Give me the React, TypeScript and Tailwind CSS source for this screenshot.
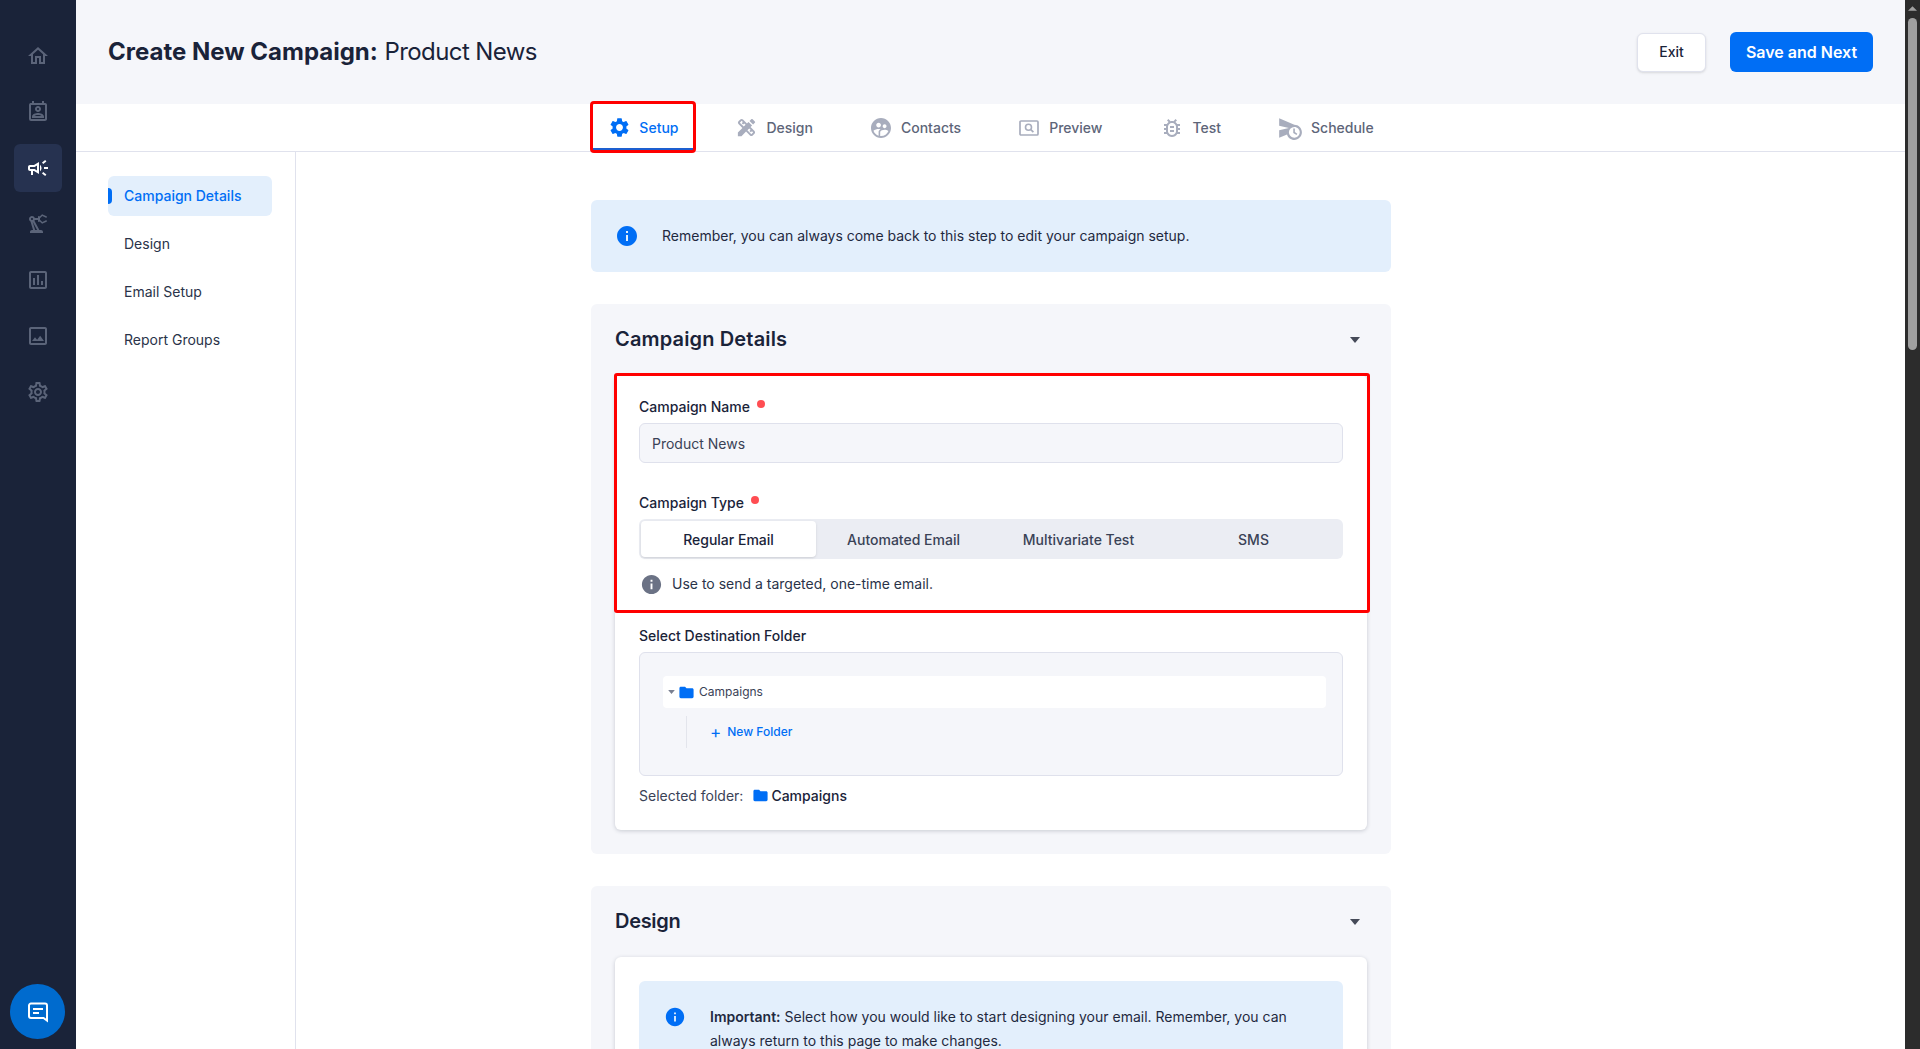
import React from "react";
import {
  MdOutlineHome,
  MdOutlinePermContactCalendar,
  MdOutlineCampaign,
  MdOutlinePrecisionManufacturing,
  MdOutlineAssessment,
  MdOutlineImage,
  MdOutlineSettings,
  MdSettings,
  MdDesignServices,
  MdOutlineBugReport,
  MdScheduleSend,
  MdSupervisedUserCircle,
  MdInfo,
  MdFolder,
} from "react-icons/md";

const font = "font-['Inter','Liberation_Sans',sans-serif]";

function PreviewIcon() {
  return (
    <svg viewBox="0 0 20 16" className="h-4 w-5 text-[#a8adbd]" fill="none" stroke="currentColor">
      <rect x="1" y="1" width="18" height="14" rx="1" strokeWidth="1.7" />
      <circle cx="9.5" cy="7.3" r="3" strokeWidth="1.6" />
      <path d="M11.8 9.6l2.6 2.6" strokeWidth="1.7" />
    </svg>
  );
}

function Caret({ small }: { small?: boolean }) {
  return (
    <svg viewBox="0 0 10 6" className={small ? "h-[4px] w-[7px] text-[#7a8091]" : "h-[6px] w-[10px] text-[#454a58]"} fill="currentColor">
      <path d="M0 0h10L5 6z" />
    </svg>
  );
}

function Required() {
  return <span className="ml-[7px] mb-[4px] h-[8px] w-[8px] rounded-full bg-[#ff4d52]" />;
}

const sideIcons = [
  { I: MdOutlineHome, active: false },
  { I: MdOutlinePermContactCalendar, active: false },
  { I: MdOutlineCampaign, active: true },
  { I: MdOutlinePrecisionManufacturing, active: false },
  { I: MdOutlineAssessment, active: false },
  { I: MdOutlineImage, active: false },
  { I: MdOutlineSettings, active: false },
];

const tabs = [
  { label: "Design", box: "w-5", icon: <MdDesignServices className="shrink-0 text-[23px] text-[#a8adbd]" /> },
  { label: "Contacts", box: "w-5", icon: <MdSupervisedUserCircle className="shrink-0 text-[24px] text-[#a8adbd]" /> },
  { label: "Preview", box: "w-5", icon: <PreviewIcon /> },
  { label: "Test", box: "ml-[2px] w-5", icon: <MdOutlineBugReport className="shrink-0 text-[24px] text-[#a8adbd]" /> },
  { label: "Schedule", box: "w-[22px]", icon: <MdScheduleSend className="shrink-0 text-[26px] text-[#a8adbd]" /> },
];

export default function App() {
  return (
    <div className={`flex h-screen overflow-hidden bg-white text-[14px] text-[#1a2339] ${font}`}>
      <aside className="flex w-[76px] shrink-0 flex-col bg-[#1a2339]">
        <nav className="flex flex-col items-center gap-2 pt-[32px]">
          {sideIcons.map(({ I, active }, i) => (
            <div
              key={i}
              className={`flex h-12 w-12 items-center justify-center rounded-md ${active ? "bg-[#263250] text-white" : "text-[#5b6479]"}`}
            >
              <I className="text-[24px]" />
            </div>
          ))}
        </nav>
        <button className="mt-auto mb-[10px] ml-[10px] flex h-[55px] w-[55px] items-center justify-center rounded-full bg-[#006bce]">
          <svg viewBox="0 0 24 24" className="h-[24px] w-[24px]" fill="none" stroke="white" strokeWidth="2">
            <path d="M5 3.5h14a2 2 0 0 1 2 2V20.5l-3.5-2.5H5a2 2 0 0 1-2-2V5.5a2 2 0 0 1 2-2Z" />
            <path d="M7 9h10M7 13h6" strokeWidth="1.8" />
          </svg>
        </button>
      </aside>

      <div className="flex min-w-0 flex-1 flex-col">
        <header className="flex h-[104px] shrink-0 items-center justify-between bg-[#f5f6fa] pl-[32px] pr-[32px]">
          <h1 className="text-[24px] leading-8 text-[#1a2339]">
            <span className="font-bold">Create New Campaign:</span>{" "}
            <span className="font-normal tracking-[-0.6px]">Product News</span>
          </h1>
          <div className="flex items-center gap-6">
            <button className="h-[39px] w-[69px] rounded-md border border-[#e0e2ed] bg-white pb-[1px] text-[14px] font-medium text-[#1a2339] shadow-sm">
              Exit
            </button>
            <button className="h-[40px] w-[143px] rounded-md bg-[#006ef5] text-[16px] font-semibold text-white">
              Save and Next
            </button>
          </div>
        </header>

        <div className="flex h-[48px] shrink-0 items-stretch justify-center gap-6 border-b border-[#e0e2ed] pl-[2px]">
          <div className="relative flex items-center gap-[10px] border-b-[3px] border-[#1d5fd0] px-[17px] pt-[3px] text-[14px] font-medium text-[#006ef5]">
            <span className="flex w-5 items-center justify-center">
              <MdSettings className="shrink-0 text-[23px]" />
            </span>
            <span>Setup</span>
            <span className="absolute left-[-2px] right-[-1px] top-[-3px] bottom-[-5px] rounded-[4px] border-[3px] border-[#ff0000]" />
          </div>
          {tabs.map((t) => (
            <div key={t.label} className="flex items-center gap-[10px] px-[17px] text-[14px] font-medium text-[#5d6579]">
              <span className={`flex items-center justify-center ${t.box}`}>{t.icon}</span>
              <span>{t.label}</span>
            </div>
          ))}
        </div>

        <div className="flex min-h-0 flex-1">
          <nav className="flex w-[220px] shrink-0 flex-col gap-2 border-r border-[#e0e2ed] pl-[32px] pr-[23px] pt-[24px]">
            <div className="relative flex h-10 items-center rounded-md bg-[#e3effc] pb-[2px] pl-4 font-medium text-[#006ef5]">
              <span className="absolute left-0 top-3 h-4 w-1 rounded-r bg-[#006ef5]" />
              Campaign Details
            </div>
            {["Design", "Email Setup", "Report Groups"].map((x) => (
              <div key={x} className="flex h-10 items-center pb-[2px] pl-4 text-[#2a3349]">
                {x}
              </div>
            ))}
          </nav>

          <main className="min-w-0 flex-1 overflow-hidden pl-[295px] pt-[48px]">
            <div className="flex w-[800px] flex-col gap-8">
              <div className="flex h-[72px] items-center rounded-md bg-[#e3effc] pl-[24px]">
                <MdInfo className="text-[24px] text-[#006ef5]" />
                <span className="ml-[23px] pb-[1px] text-[#1f2940]">Remember, you can always come back to this step to edit your campaign setup.</span>
              </div>

              <section className="rounded-md bg-[#f5f6fa] px-6 pb-6">
                <div className="flex h-[71px] items-center justify-between pr-[7px]">
                  <h2 className="pb-[1px] text-[20px] font-semibold tracking-[0.15px] text-[#1a2339]">Campaign Details</h2>
                  <Caret />
                </div>
                <div className="relative rounded-md bg-white px-6 pb-[25px] pt-[21px] shadow-[0_1px_4px_rgba(26,35,57,0.2)]">
                  <span className="absolute -left-[1px] -right-[3px] -top-[2px] h-[240px] rounded-[3px] border-[3px] border-[#ff0000]" />
                  <label className="flex h-5 items-center font-medium">
                    Campaign Name
                    <Required />
                  </label>
                  <div className="mt-[7px] flex h-10 items-center rounded-md border border-[#dfe1ec] bg-[#f5f6fa] pl-3 text-[#3a4256]">
                    Product News
                  </div>
                  <label className="mt-[29px] flex h-5 items-center font-medium">
                    Campaign Type
                    <Required />
                  </label>
                  <div className="mt-[7px] flex h-10 items-center rounded-md bg-[#ebedf3] px-[2px] text-center">
                    <div className="flex h-9 w-[175px] items-center justify-center rounded bg-white font-medium shadow-sm">Regular Email</div>
                    <div className="w-[175px] font-medium text-[#3a4256]">Automated Email</div>
                    <div className="w-[175px] font-medium text-[#3a4256]">Multivariate Test</div>
                    <div className="w-[175px] font-medium text-[#3a4256]">SMS</div>
                  </div>
                  <div className="mt-[15px] flex h-5 items-center pl-[1px]">
                    <MdInfo className="text-[23px] text-[#6b7285]" />
                    <span className="ml-[9px] pb-[2px] text-[#2a3349]">Use to send a targeted, one-time email.</span>
                  </div>
                  <label className="mt-[32px] block h-5 font-medium leading-5">Select Destination Folder</label>
                  <div className="mt-[6px] h-[124px] rounded-md border border-[#dfe1ec] bg-[#f5f6fa] pl-[23px] pr-[16px] pt-[23px] text-[12px]">
                    <div className="flex h-8 items-center rounded-sm bg-white pl-[5px]">
                      <Caret small />
                      <MdFolder className="ml-[3px] text-[17px] text-[#006ef5]" />
                      <span className="ml-[4px] text-[#3a4256]">Campaigns</span>
                    </div>
                    <div className="ml-[23px] mt-2 flex h-8 items-center border-l border-[#e3e5ec] pl-[23px] font-medium text-[#006ef5]">
                      <span className="mr-[6px] text-[17px] font-normal leading-none">+</span>
                      New Folder
                    </div>
                  </div>
                  <div className="mt-[9px] flex h-5 items-center">
                    <span className="text-[#3a4256]">Selected folder:</span>
                    <MdFolder className="ml-[9px] text-[17px] text-[#006ef5]" />
                    <span className="ml-[2px] font-medium">Campaigns</span>
                  </div>
                </div>
              </section>

              <section className="rounded-md bg-[#f5f6fa] px-6 pb-6">
                <div className="flex h-[71px] items-center justify-between pr-[7px]">
                  <h2 className="pb-[1px] text-[20px] font-semibold tracking-[-0.3px] text-[#1a2339]">Design</h2>
                  <Caret />
                </div>
                <div className="rounded-md bg-white p-6 shadow-[0_1px_4px_rgba(26,35,57,0.2)]">
                  <div className="flex rounded-md bg-[#e3effc] py-6 pl-[25px] pr-[24px]">
                    <MdInfo className="mt-[1px] shrink-0 text-[22px] text-[#006ef5]" />
                    <p className="ml-[24px] leading-6 text-[#1f2940]">
                      <strong className="font-semibold">Important:</strong> Select how you would like to start designing your email. Remember, you can always return to this page to make changes.
                    </p>
                  </div>
                </div>
              </section>
            </div>
          </main>
        </div>
      </div>

      <div className="flex w-[15px] shrink-0 flex-col items-center bg-[#2c2c2c] pt-[6px]">
        <svg viewBox="0 0 10 5" className="h-[5px] w-[9px] text-[#a0a0a0]" fill="currentColor"><path d="M0 5L5 0l5 5z" /></svg>
        <div className="mt-[7px] h-[332px] w-[9px] rounded-full bg-[#9f9f9f]" />
      </div>
    </div>
  );
}
